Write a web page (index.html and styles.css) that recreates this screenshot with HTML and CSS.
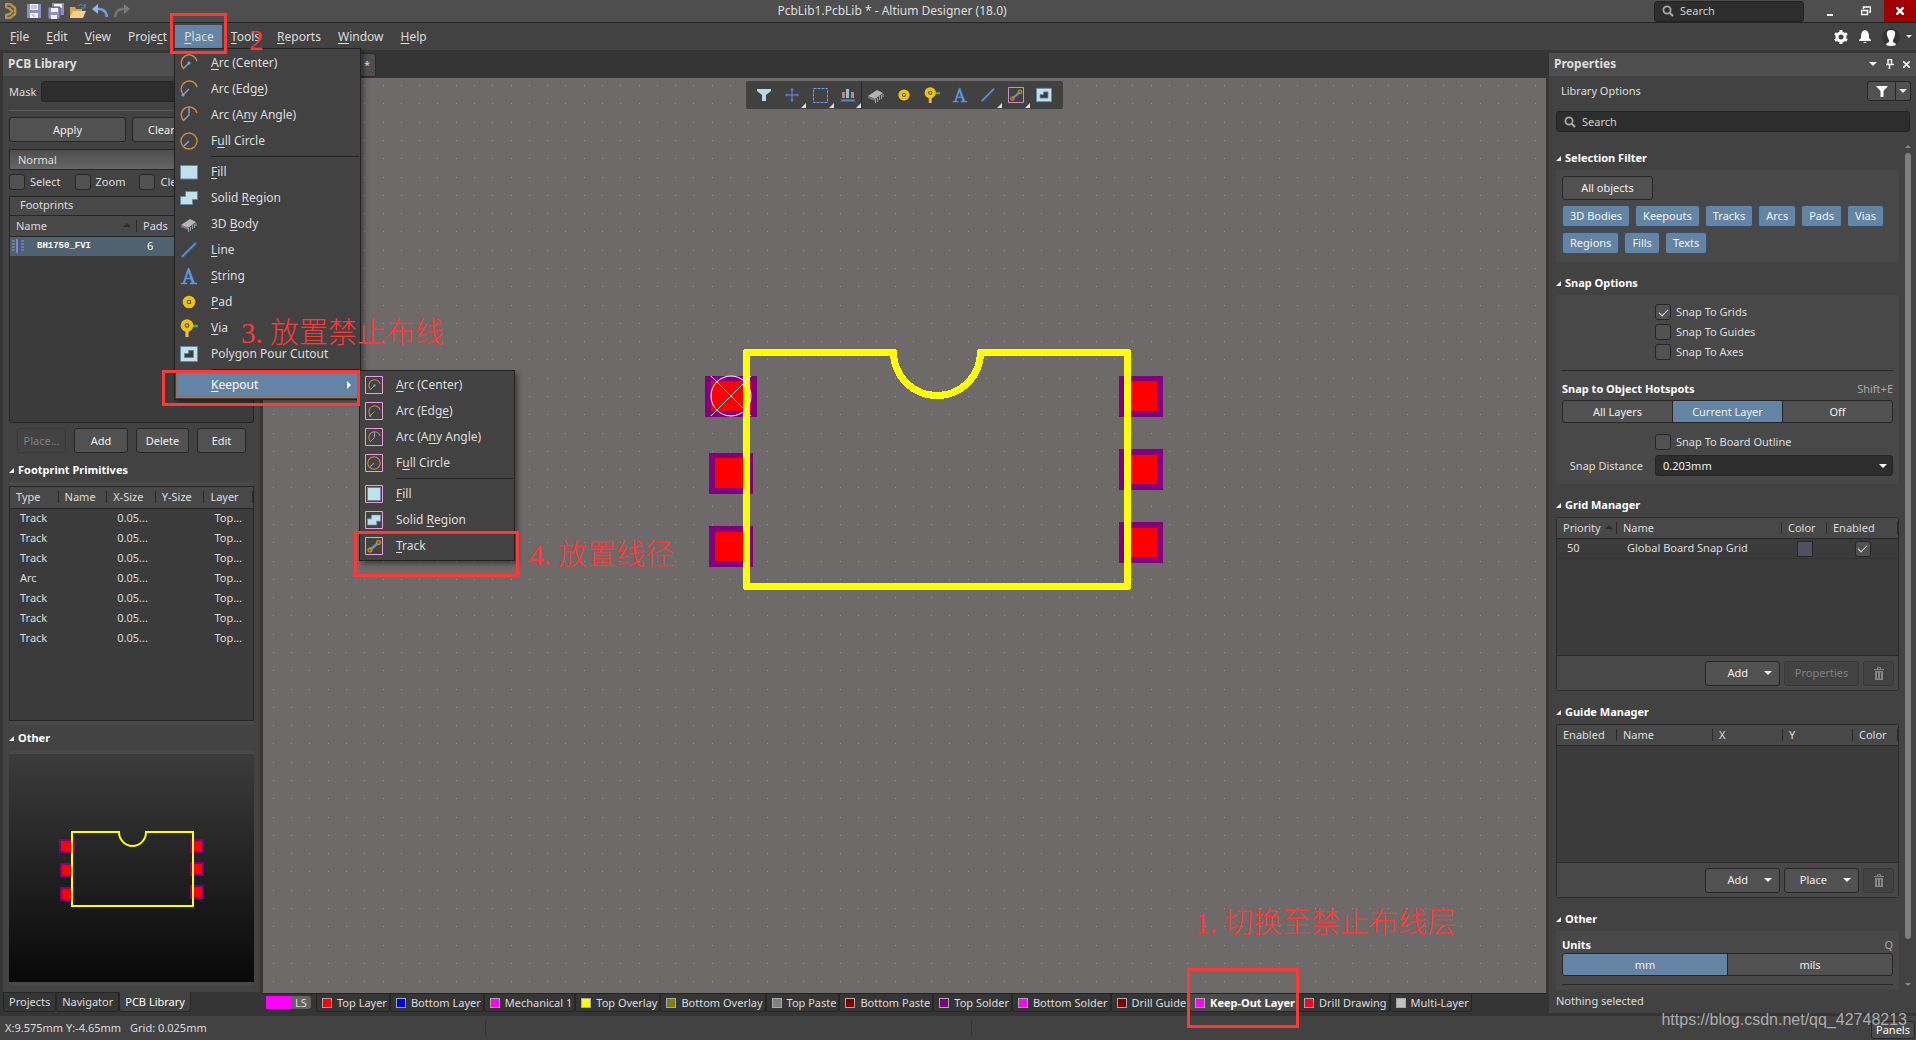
FILE: index.html
```html
<!DOCTYPE html>
<html lang="en">
<head>
<meta charset="utf-8">
<title>PcbLib1.PcbLib * - Altium Designer (18.0)</title>
<link rel="stylesheet" href="styles.css">
</head>
<body>
<svg class="defs" aria-hidden="true">
  <symbol id="arc-center" viewBox="0 0 18 18"><path d="M4 15A8 8 0 1 1 17 7" fill="none" stroke="#d08a3c" stroke-width="1.4"/><path d="M4 14L9 9" stroke="#86a8e6" stroke-width="1.2"/><circle cx="9" cy="9" r="1.6" fill="#7aa2ee"/></symbol>
  <symbol id="arc-edge" viewBox="0 0 18 18"><path d="M3 14A8 8 0 1 1 17 7" fill="none" stroke="#d08a3c" stroke-width="1.4"/><path d="M4 14L9 9" stroke="#86a8e6" stroke-width="1.2"/><circle cx="3" cy="15" r="1.6" fill="#7aa2ee"/></symbol>
  <symbol id="arc-any" viewBox="0 0 18 18"><path d="M4 15A8 8 0 1 1 17 7" fill="none" stroke="#d08a3c" stroke-width="1.4"/><path d="M4 14L9 9V1" fill="none" stroke="#86a8e6" stroke-width="1.3"/></symbol>
  <symbol id="circle" viewBox="0 0 18 18"><circle cx="9" cy="9" r="8" fill="none" stroke="#d08a3c" stroke-width="1.4"/><path d="M4 14L9 9" stroke="#86a8e6" stroke-width="1.3"/></symbol>
  <symbol id="fill" viewBox="0 0 18 18"><path d="M.5 2.500h17v13.500h-17z" fill="#c0e0ea" stroke="#64899f"/></symbol>
  <symbol id="region" viewBox="0 0 18 18"><path d="M5.500 2.500h12v8h-5v5h-12v-8h5z" fill="#c0e0ea" stroke="#64899f"/></symbol>
  <symbol id="body3d" viewBox="0 0 18 18"><path d="M1 10L10 4L16 7L8 13z" fill="#b4b4b4"/><path d="M1 10l7 3v2l-7-3z" fill="#777"/><path d="M8.500 13v4M10.500 12v4M12.500 10v4M14.500 9v4M16 8v3" stroke="#8ba8b0"/></symbol>
  <symbol id="line" viewBox="0 0 18 18"><path d="M2 16L16 2" stroke="#3f74bd" stroke-width="2.600"/><path d="M2 15.500L15.500 2" stroke="#6ba2e8"/></symbol>
  <symbol id="string" viewBox="0 0 18 18"><path d="M9 1l5.500 15H17v1h-7v-1h2l-1.200-4H6L4.500 16H7v1H1v-1h2L8 1.500zM8.300 5L6.400 11h4z" fill="#5b98e4" stroke="#5b98e4" stroke-width=".5"/></symbol>
  <symbol id="pad" viewBox="0 0 18 18"><circle cx="9" cy="9" r="4.300" fill="#4d4430" stroke="#edc40c" stroke-width="4"/><circle cx="9" cy="9" r="1.300" fill="#d8bc60"/></symbol>
  <symbol id="via" viewBox="0 0 18 18"><path d="M12 7h6" stroke="#5fa83c" stroke-width="2.500"/><path d="M7 12v6" stroke="#d99a4a" stroke-width="3.500"/><path d="M7 12v6" stroke="#f6d5a0"/><circle cx="7" cy="6.500" r="4.300" fill="#4d4430" stroke="#edc40c" stroke-width="4"/><circle cx="7" cy="6.500" r="1.300" fill="#d8bc60"/></symbol>
  <symbol id="cutout" viewBox="0 0 18 18"><path d="M.5 1.500h17v15h-17z" fill="#c0e0ea" stroke="#64899f"/><path d="M8.500 5.500h5v7h-9v-4h4z" fill="#3d3d3d" stroke="#64899f"/></symbol>
  <symbol id="track" viewBox="0 0 18 18"><path d="M5 13L13 6" stroke="#6d8fc4" stroke-width="2.400"/><circle cx="5" cy="13" r="1.900" fill="none" stroke="#b98a1c" stroke-width="1.500"/><circle cx="13.500" cy="5.500" r="1.900" fill="none" stroke="#b98a1c" stroke-width="1.500"/></symbol>
  <symbol id="frame" viewBox="0 0 18 18"><path d="M.5 .5h17v17H.5z" fill="none" stroke="#ee9cdc"/></symbol>
  <symbol id="down" viewBox="0 0 8 4"><path d="M0 0h8L4 4z" fill="#f0f0f0"/></symbol>
  <symbol id="lens" viewBox="0 0 12 12"><circle cx="5" cy="5" r="3.600" fill="none" stroke="#a8a8a8" stroke-width="1.800"/><path d="M8 8l3 3" stroke="#a8a8a8" stroke-width="2.200"/></symbol>
  <symbol id="trash" viewBox="0 0 10 13"><path d="M3.500 2V.5h3V2M0 2.500h10" fill="none" stroke="#858585"/><path d="M1 4h8v9H1z" fill="#858585"/><path d="M3.500 5.500v6M6.500 5.500v6" stroke="#444"/></symbol>
  <symbol id="chip" viewBox="0 0 12 14"><path d="M0 2h12M0 5h12M0 8h12M0 11h12" stroke="#8b97a5"/><path d="M3 0h6v14H3z" fill="#4b5688"/><path d="M4 0h2v14H4z" fill="#8088b4"/></symbol>
</svg>

<header class="titlebar">
  <div class="quick">
    <svg width="12" height="16" viewBox="0 0 12 16"><path d="M1 4V1h4l5 4v6l-5 4H1v-3l4-1 2-3-3-3z" fill="none" stroke="#b39250" stroke-width="2.500"/></svg>
    <svg width="16" height="16" viewBox="0 0 16 16"><path d="M1 1h14v14H1z" fill="#8d8dc4"/><path d="M4 1h8v6H4zM4 10h8v5H4z" fill="#f2f2fa"/><path d="M5 3h6M5 5h6M6 12h2v2" stroke="#9a9ab8" fill="none"/></svg>
    <svg width="16" height="16" viewBox="0 0 16 16"><path d="M4 0h12v12H4z" fill="#8d8dc4"/><path d="M6 1h8v4H6z" fill="#f2f2fa"/><path d="M0 4h12v12H0z" fill="#8d8dc4" stroke="#555"/><path d="M3 5h7v4H3zM3 12h6v4H3z" fill="#f2f2fa"/></svg>
    <svg width="16" height="16" viewBox="0 0 16 16"><path d="M0 15V4h5l1 2h6v9z" fill="#d6a752"/><path d="M3 8h13l-3 7H0z" fill="#f3d08c"/><path d="M8 3q3-3 6 0l1-2v4h-4" fill="none" stroke="#5d87b0"/></svg>
    <svg width="16" height="14" viewBox="0 0 16 14"><path d="M15 13q-1-8-8-8H4" fill="none" stroke="#6d9fe6" stroke-width="2.500"/><path d="M6 0v10L0 5z" fill="#8bb8f5"/></svg>
    <svg width="16" height="14" viewBox="0 0 16 14"><path d="M1 13q1-8 8-8h3" fill="none" stroke="#757575" stroke-width="2.500"/><path d="M10 0v10l6-5z" fill="#7c7c7c"/></svg>
  </div>
  <h1 class="apptitle">PcbLib1.PcbLib * - Altium Designer (18.0)</h1>
  <label class="search titlesearch"><svg width="12" height="12"><use href="#lens"/></svg><input type="text" aria-label="Search application" placeholder="Search"></label>
  <button class="winbtn" aria-label="Minimize"><svg width="10" height="10" viewBox="0 0 10 10"><path d="M2 9h6" stroke="#fff" stroke-width="2"/></svg></button>
  <button class="winbtn" aria-label="Restore"><svg width="10" height="10" viewBox="0 0 10 10"><path d="M.5 4.500h6v4h-6zM2.500 3V1h7v5H8" fill="none" stroke="#fff" stroke-width="1.500"/></svg></button>
  <button class="winbtn close" aria-label="Close"><svg width="8" height="8" viewBox="0 0 8 8"><path d="M0 0l8 8M8 0L0 8" stroke="#fff" stroke-width="2.500"/></svg></button>
</header>

<nav class="menubar">
  <button><u>F</u>ile</button><button><u>E</u>dit</button><button><u>V</u>iew</button><button>Proje<u>c</u>t</button><button class="open"><u>P</u>lace</button><button><u>T</u>ools</button><button><u>R</u>eports</button><button><u>W</u>indow</button><button><u>H</u>elp</button>
  <div class="account">
    <svg width="14" height="14" viewBox="0 0 14 14"><circle cx="7" cy="7" r="4" fill="none" stroke="#fff" stroke-width="3"/><path d="M7 0v3M7 11v3M1 3.500l2.500 1.500M10.500 9l2.500 1.500M1 10.500L3.500 9M10.500 5L13 3.500" stroke="#fff" stroke-width="3"/></svg>
    <svg width="12" height="14" viewBox="0 0 12 14"><path d="M6 0q4 1 4 6v2l2 2v1H0v-1l2-2V6q0-5 4-6zM4 12h4q-2 2-4 0z" fill="#fff"/></svg>
    <svg width="18" height="18" viewBox="0 0 18 18"><circle cx="9" cy="9" r="9" fill="#333"/><path d="M9 2q5 0 4 5-1 4-2 5v2q3 1 3 3-5 2-10 0 0-2 3-3v-2q-1-1-2-5-1-5 4-5z" fill="#fff"/></svg>
    <svg width="6" height="3"><use href="#down"/></svg>
  </div>
</nav>

<main class="workspace">
  <section class="left">
    <div class="panel">
      <h2 class="panelhead">PCB Library</h2>
      <div class="leftbody">
        <div class="maskrow"><label for="mask">Mask</label><input id="mask" class="field" type="text"></div>
        <hr>
        <div class="twobtn"><button class="btn">Apply</button><button class="btn">Clear</button></div>
        <select class="mode" aria-label="Highlight mode"><option>Normal</option></select>
        <div class="checks"><label><input type="checkbox">Select</label><label><input type="checkbox">Zoom</label><label><input type="checkbox">Clear Existing</label></div>
        <div class="footprints">
          <h3>Footprints</h3>
          <table>
            <colgroup><col class="c128"><col></colgroup>
            <thead><tr><th>Name<i class="sort"></i></th><th>Pads</th></tr></thead>
            <tbody><tr class="sel"><td><span class="fpname"><svg width="12" height="14"><use href="#chip"/></svg>BH1750_FVI</span></td><td class="center6">6</td></tr></tbody>
          </table>
        </div>
        <div class="fourbtn"><button class="btn" disabled>Place...</button><button class="btn">Add</button><button class="btn">Delete</button><button class="btn">Edit</button></div>
        <h3 class="section">Footprint Primitives</h3>
        <div class="tray">
          <div class="prims">
            <table>
              <thead><tr><th>Type</th><th>Name</th><th>X-Size</th><th>Y-Size</th><th>Layer</th></tr></thead>
              <tbody>
                <tr><td>Track</td><td></td><td>0.05...</td><td></td><td>Top...</td></tr>
                <tr><td>Track</td><td></td><td>0.05...</td><td></td><td>Top...</td></tr>
                <tr><td>Track</td><td></td><td>0.05...</td><td></td><td>Top...</td></tr>
                <tr><td>Arc</td><td></td><td>0.05...</td><td></td><td>Top...</td></tr>
                <tr><td>Track</td><td></td><td>0.05...</td><td></td><td>Top...</td></tr>
                <tr><td>Track</td><td></td><td>0.05...</td><td></td><td>Top...</td></tr>
                <tr><td>Track</td><td></td><td>0.05...</td><td></td><td>Top...</td></tr>
              </tbody>
            </table>
          </div>
        </div>
        <h3 class="section">Other</h3>
        <div class="tray grow">
          <div class="preview">
            <svg width="245" height="229" viewBox="0 0 245 229">
              <g fill="#f00" stroke="#800080" stroke-width="2"><path d="M51 86h14v12H51zM52 110h12v12H52zM52 134h12v12H52zM182 86h12v12h-12zM182 109h12v12h-12zM182 132h12v12h-12z"/></g>
              <path d="M110 78H63v74h121V78h-47a13.500 14 0 0 1-27 0z" fill="none" stroke="#ff0" stroke-width="2"/>
            </svg>
          </div>
        </div>
      </div>
    </div>
    <div class="paneltabs"><button>Projects</button><button>Navigator</button><button class="on">PCB Library</button></div>
  </section>

  <section class="center">
    <div class="doctabs"><button>PcbLib1.PcbLib *</button></div>
    <div class="canvas">
      <svg class="board" width="100%" height="100%">
        <defs>
          <pattern id="dots" x="10" y="117" width="128" height="128" patternUnits="userSpaceOnUse"><path d="M0 .5h128M0 18.500h128M0 36.500h128M0 55.500h128M0 73.500h128M0 91.500h128M0 110.500h128" stroke="#97938f" stroke-dasharray="1 17 1 17 1 18 1 17 1 17 1 18 1 17"/></pattern>
        </defs>
        <rect width="100%" height="100%" fill="url(#dots)"/>
        <g transform="translate(427 252)">
          <path d="M15 46h52v41H15zM19 123h44v41H19zM19 196h44v41H19zM429 46h44v41h-44zM429 119h44v41h-44zM429 192h44v41h-44z" fill="#800080"/>
          <path d="M21 51h40v30H21zM25 128h32v30H25zM25 202h32v29H25zM435 51h32v30h-32zM435 125h32v29h-32zM435 198h32v29h-32z" fill="#f00"/>
          <path d="M203.500 22H56.500v234.500h381V22h-147a43.500 43.500 0 0 1-87 0z" fill="none" stroke="#ff0" stroke-width="7" stroke-linejoin="round"/>
          <g fill="none" stroke="#fff"><circle cx="41" cy="66" r="20"/><path d="M21 46l40 40M61 46L21 86"/></g>
        </g>
      </svg>
      <div class="floatbar">
        <button aria-label="Filter"><svg width="14" height="12" viewBox="0 0 14 12"><path d="M0 0h14v2L9 6v6H5V6L0 2z" fill="#b9dbe6"/></svg></button>
        <button class="more" aria-label="Snap"><svg width="14" height="14" viewBox="0 0 14 14"><path d="M7 0v14M0 7h14M5.500 2h3M5.500 12h3M2 5.500v3M12 5.500v3" stroke="#6f8be0"/></svg></button>
        <button class="more" aria-label="Selection"><svg width="15" height="15" viewBox="0 0 15 15"><path d="M.5 .5h14v14H.5z" fill="none" stroke="#6f9df0" stroke-dasharray="3 1"/></svg></button>
        <button class="more wide" aria-label="Align"><svg width="14" height="14" viewBox="0 0 14 14"><path d="M1 4h3v6H1zM10 4h3v6h-3z" fill="#c98282"/><path d="M5 1h3v9H5z" fill="#8ec1e0"/><path d="M0 12.500h14" stroke="#5a87c0" stroke-width="2"/></svg></button>
        <button aria-label="3D body"><svg width="18" height="18"><use href="#body3d"/></svg></button>
        <button aria-label="Pad"><svg width="16" height="16"><use href="#pad"/></svg></button>
        <button aria-label="Via"><svg width="16" height="16"><use href="#via"/></svg></button>
        <button aria-label="String"><svg width="16" height="16"><use href="#string"/></svg></button>
        <button class="more" aria-label="Line"><svg width="16" height="16"><use href="#line"/></svg></button>
        <button class="more" aria-label="Keepout track"><svg width="16" height="16"><use href="#track"/><use href="#frame"/></svg></button>
        <button aria-label="Polygon cutout"><svg width="16" height="16"><use href="#cutout"/></svg></button>
      </div>
    </div>
    <div class="layers">
      <div class="ls"><span class="lscolor"></span><button>LS</button></div>
      <button><i class="red"></i>Top Layer</button><button><i class="blue"></i>Bottom Layer</button><button><i class="magenta"></i>Mechanical 1</button><button><i class="yellow"></i>Top Overlay</button><button><i class="olive"></i>Bottom Overlay</button><button><i class="gray"></i>Top Paste</button><button><i class="maroon"></i>Bottom Paste</button><button><i class="purple"></i>Top Solder</button><button><i class="magenta"></i>Bottom Solder</button><button><i class="maroon"></i>Drill Guide</button><button class="on"><i class="magenta"></i>Keep-Out Layer</button><button><i class="crimson"></i>Drill Drawing</button><button><i class="silver"></i>Multi-Layer</button>
    </div>
  </section>

  <section class="right">
    <div class="panelhead"><h2>Properties</h2>
      <svg width="8" height="4"><use href="#down"/></svg>
      <svg width="8" height="10" viewBox="0 0 8 10"><path d="M2 0v5M5.500 0v5M2 .5h4M0 5.500h8M3.500 6v4" fill="none" stroke="#f0f0f0" stroke-width="1.500"/></svg>
      <svg width="7" height="7" viewBox="0 0 8 8"><path d="M0 0l8 8M8 0L0 8" stroke="#f0f0f0" stroke-width="2"/></svg>
    </div>
    <div class="optrow"><span>Library Options</span>
      <div class="split"><button aria-label="Filter"><svg width="12" height="11" viewBox="0 0 12 11"><path d="M0 0h12L7.500 5v6h-3V5z" fill="#fff"/></svg></button><button aria-label="Filter options"><svg width="8" height="4"><use href="#down"/></svg></button></div>
    </div>
    <label class="search propsearch"><svg width="12" height="12"><use href="#lens"/></svg><input type="text" aria-label="Search properties" placeholder="Search"></label>
    <div class="scroller">
      <div class="props">
        <h3 class="section">Selection Filter</h3>
        <div class="card filter">
          <button class="btn all">All objects</button>
          <div class="chips"><button>3D Bodies</button><button>Keepouts</button><button>Tracks</button><button>Arcs</button><button>Pads</button><button>Vias</button><button>Regions</button><button>Fills</button><button>Texts</button></div>
        </div>
        <h3 class="section">Snap Options</h3>
        <div class="card snap">
          <label class="snapcheck"><input type="checkbox" checked>Snap To Grids</label>
          <label class="snapcheck"><input type="checkbox">Snap To Guides</label>
          <label class="snapcheck"><input type="checkbox">Snap To Axes</label>
          <hr>
          <div class="labelrow"><b>Snap to Object Hotspots</b><span>Shift+E</span></div>
          <div class="seg"><button>All Layers</button><button class="on">Current Layer</button><button>Off</button></div>
          <label class="snapcheck board-outline"><input type="checkbox">Snap To Board Outline</label>
          <div class="distance"><label for="dist">Snap Distance</label><select id="dist"><option>0.203mm</option></select></div>
        </div>
        <h3 class="section">Grid Manager</h3>
        <div class="manager">
          <table>
            <colgroup><col class="c60"><col><col class="c45"><col class="c71"></colgroup>
            <thead><tr><th>Priority<i class="sort"></i></th><th>Name</th><th>Color</th><th>Enabled</th></tr></thead>
            <tbody><tr><td>50</td><td>Global Board Snap Grid</td><td class="mid"><i class="swatch"></i></td><td class="mid"><input type="checkbox" checked aria-label="Enabled"></td></tr></tbody>
          </table>
          <div class="foot"><button class="btn dd">Add<svg width="8" height="4"><use href="#down"/></svg></button><button class="btn" disabled>Properties</button><button class="btn del" disabled aria-label="Delete grid"><svg width="10" height="13"><use href="#trash"/></svg></button></div>
        </div>
        <h3 class="section">Guide Manager</h3>
        <div class="manager">
          <table>
            <colgroup><col class="c60"><col><col class="c70"><col class="c70"><col class="c45"></colgroup>
            <thead><tr><th>Enabled</th><th>Name</th><th>X</th><th>Y</th><th>Color</th></tr></thead>
          </table>
          <div class="foot"><button class="btn dd">Add<svg width="8" height="4"><use href="#down"/></svg></button><button class="btn dd">Place<svg width="8" height="4"><use href="#down"/></svg></button><button class="btn del" disabled aria-label="Delete guide"><svg width="10" height="13"><use href="#trash"/></svg></button></div>
        </div>
        <h3 class="section">Other</h3>
        <div class="card units">
          <div class="labelrow"><b>Units</b><span>Q</span></div>
          <div class="seg"><button class="on">mm</button><button>mils</button></div>
          <hr>
        </div>
      </div>
      <div class="scrollbar"><i class="up"></i><i class="thumb"></i><i class="dn"></i></div>
    </div>
    <div class="selstatus">Nothing selected</div>
  </section>
</main>

<footer class="status"><div class="cell"><span>X:9.575mm Y:-4.65mm</span><span>Grid: 0.025mm</span></div><div class="cell"></div><button class="panels">Panels</button></footer>

<div class="menu place">
  <button><svg width="18" height="18"><use href="#arc-center"/></svg><span><u>A</u>rc (Center)</span></button>
  <button><svg width="18" height="18"><use href="#arc-edge"/></svg><span>Arc (Edg<u>e</u>)</span></button>
  <button><svg width="18" height="18"><use href="#arc-any"/></svg><span>Arc (A<u>n</u>y Angle)</span></button>
  <button><svg width="18" height="18"><use href="#circle"/></svg><span>F<u>u</u>ll Circle</span></button>
  <hr>
  <button><svg width="18" height="18"><use href="#fill"/></svg><span><u>F</u>ill</span></button>
  <button><svg width="18" height="18"><use href="#region"/></svg><span>Solid <u>R</u>egion</span></button>
  <button><svg width="18" height="18"><use href="#body3d"/></svg><span>3D <u>B</u>ody</span></button>
  <button><svg width="18" height="18"><use href="#line"/></svg><span><u>L</u>ine</span></button>
  <button><svg width="18" height="18"><use href="#string"/></svg><span><u>S</u>tring</span></button>
  <button><svg width="18" height="18"><use href="#pad"/></svg><span><u>P</u>ad</span></button>
  <button><svg width="18" height="18"><use href="#via"/></svg><span><u>V</u>ia</span></button>
  <button><svg width="18" height="18"><use href="#cutout"/></svg><span>Polygon Pour Cutout</span></button>
  <hr>
  <button class="on"><svg width="18" height="18"></svg><span><u>K</u>eepout</span><svg class="caret" width="4" height="8" viewBox="0 0 4 8"><path d="M0 0l4 4-4 4z" fill="#fff"/></svg></button>
</div>
<div class="menu keepout">
  <button><svg width="18" height="18"><use href="#arc-center" x="3" y="3" width="13" height="13"/><use href="#frame"/></svg><span><u>A</u>rc (Center)</span></button>
  <button><svg width="18" height="18"><use href="#arc-edge" x="3" y="3" width="13" height="13"/><use href="#frame"/></svg><span>Arc (Edg<u>e</u>)</span></button>
  <button><svg width="18" height="18"><use href="#arc-any" x="3" y="3" width="13" height="13"/><use href="#frame"/></svg><span>Arc (A<u>n</u>y Angle)</span></button>
  <button><svg width="18" height="18"><use href="#circle" x="2" y="2" width="14" height="14"/><use href="#frame"/></svg><span>F<u>u</u>ll Circle</span></button>
  <hr>
  <button><svg width="18" height="18"><path d="M2.500 2.500h13v13h-13z" fill="#c0e0ea" stroke="#64899f"/><use href="#frame"/></svg><span><u>F</u>ill</span></button>
  <button><svg width="18" height="18"><use href="#region" x="2" y="2" width="14" height="14"/><use href="#frame"/></svg><span>Solid <u>R</u>egion</span></button>
  <button><svg width="18" height="18"><use href="#track"/><use href="#frame"/></svg><span><u>T</u>rack</span></button>
</div>

<div class="mark m-place"></div>
<div class="mark m-keepout"></div>
<div class="mark m-track"></div>
<div class="mark m-layer"></div>
<div class="note n2">2</div>
<div class="note n3">3. 放置禁止布线</div>
<div class="note n4">4. 放置线径</div>
<div class="note n1">1. 切换至禁止布线层</div>
<div class="watermark">https://blog.csdn.net/qq_42748213</div>
</body>
</html>
```
FILE: styles.css
```css
* { box-sizing: border-box; }
body {
  margin: 0;
  height: 100vh;
  display: flex;
  flex-direction: column;
  overflow: hidden;
  position: relative;
  background: #353535;
  color: #dedede;
  font: 11px/16px "Noto Sans", "Noto Sans CJK SC", sans-serif;
}
button, input, select { font: inherit; color: inherit; margin: 0; padding: 0; border: 0; background: none; }
h1, h2, h3 { margin: 0; font-size: inherit; }
svg { display: block; flex: none; }
hr { border: 0; border-top: 1px solid #2b2b2b; margin: 0; width: 100%; }
u { text-underline-offset: 2px; }
.defs { position: absolute; width: 0; height: 0; }

/* title bar */
.titlebar { display: flex; align-items: center; height: 23px; flex: none; background: #4e4e4e; border-bottom: 1px solid #242424; }
.quick { display: flex; align-items: center; gap: 6px; padding-left: 5px; }
.quick svg:first-child { margin-right: 3px; }
.apptitle { flex: 1; text-align: center; font-weight: 400; font-size: 12px; }
.search { display: flex; align-items: center; gap: 6px; background: #2d2d2d; border: 1px solid #222; border-radius: 3px; padding-left: 7px; height: 21px; }
.search input { flex: 1; min-width: 0; outline: 0; }
.search input::placeholder { color: #d0d0d0; opacity: 1; }
.titlesearch { width: 150px; margin-right: 8px; }
.winbtn { width: 36px; height: 22px; display: grid; place-items: center; }
.winbtn.close { width: 32px; background: #a00000; }

/* menu bar */
.menubar { display: flex; align-items: center; height: 27px; flex: none; padding: 0 4px 0 1px; background: #424242; font-size: 12px; }
.menubar > button { height: 23px; padding: 0 8px 0 9px; }
.menubar .open { background: #6384a4; }
.account { margin-left: auto; display: flex; align-items: center; gap: 11px; }
.account svg:last-child { margin-left: -5px; }

.workspace { flex: 1; min-height: 0; display: flex; }

/* shared controls */
.panelhead { height: 23px; flex: none; display: flex; align-items: center; gap: 9px; padding: 0 6px 1px 5px; background: #4e4e4e; font-size: 12px; font-weight: 700; }
.panelhead h2 { flex: 1; }
.btn { height: 25px; background: #515151; border: 1px solid #262626; border-radius: 3px; color: #f0f0f0; }
.btn:disabled { background: #424242; border-color: #383838; color: #808080; }
.field { background: #2d2d2d; border: 1px solid #242424; border-radius: 3px; height: 21px; }
input[type="checkbox"] { appearance: none; flex: none; width: 16px; height: 16px; background: #515151; border: 1px solid #262626; border-radius: 3px; display: grid; place-items: center; }
input[type="checkbox"]:checked::before { content: ""; width: 8px; height: 4px; margin-top: -2px; border: solid #e0e0e0; border-width: 0 0 1px 1px; transform: rotate(-45deg); }
.section { display: flex; align-items: center; gap: 4px; font-weight: 700; color: #fff; line-height: 16px; }
.section::before { content: ""; border: solid transparent; border-width: 0 0 5px 5px; border-bottom-color: #eee; }
table { width: 100%; border-collapse: collapse; table-layout: fixed; }
th { height: 20px; padding: 0 0 0 6px; text-align: left; font-weight: 400; position: relative; background: #484848; border-bottom: 1px solid #262626; white-space: nowrap; }
th::after { content: ""; position: absolute; right: 0; top: 4px; height: 12px; border-right: 1px solid #2a2a2a; }
td { height: 20px; padding: 0 0 0 10px; white-space: nowrap; }
.sort { display: inline-block; border: 4px solid transparent; border-top: 0; border-bottom-color: #2a2a2a; margin: 0 0 3px 4px; }
.mid { text-align: center; padding: 0; }
.mid input, .swatch { display: inline-grid; vertical-align: middle; }
.swatch { width: 16px; height: 16px; background: #51505f; border: 1px solid #262626; }

/* left panel */
.left { width: 260px; flex: none; display: flex; flex-direction: column; padding: 3px 0 4px 3px; }
.panel { flex: 1; min-height: 0; display: flex; flex-direction: column; background: #424242; }
.leftbody { flex: 1; min-height: 0; display: flex; flex-direction: column; padding: 5px 6px 6px; }
.maskrow { display: flex; align-items: center; gap: 5px; }
.maskrow input { flex: 1; min-width: 0; }
.leftbody > hr { margin: 8px 0 6px; border-color: #585858; }
.twobtn { display: grid; grid-template-columns: 117px 1fr; gap: 6px; }
.twobtn .btn:nth-child(2) { text-align: left; padding-left: 15px; }
.mode { height: 21px; margin: 7px 0 4px; padding-left: 8px; appearance: none; background: linear-gradient(#4d4d4d, #666); border: 1px solid #262626; border-radius: 2px; }
.checks { display: flex; gap: 14px; white-space: nowrap; overflow: hidden; flex: none; }
.checks label, .snapcheck { display: flex; align-items: center; gap: 5px; }
.footprints { height: 227px; margin: 6px 0 5px; flex: none; border: 1px solid #262626; border-radius: 2px; background: #3b3b3b; }
.footprints h3 { height: 19px; padding-left: 10px; font-weight: 400; background: #484848; border-bottom: 1px solid #262626; }
.c128 { width: 127px; }
.footprints .sort { margin-left: 76px; }
.footprints .sel { background: #4f6272; color: #fff; }
.footprints td { padding-left: 2px; }
.footprints .center6 { padding-left: 10px; }
.fpname { display: flex; align-items: center; gap: 13px; font: 700 9px/14px "Liberation Mono", monospace; }
.fourbtn { display: grid; grid-template-columns: 49px 54px 53px 49px; gap: 8px; padding-left: 8px; }
.leftbody .section { margin: 9px 0 4px; }
.leftbody .tray + .section { margin-top: 5px; }
.tray { background: #484848; border-radius: 3px; padding: 4px 0; }
.tray.grow { flex: 1; min-height: 0; display: flex; }
.prims { height: 235px; border: 1px solid #262626; background: #3b3b3b; }
.prims th { height: 21px; }
.preview { flex: 1; display: grid; place-items: center; background: linear-gradient(#3b3b3b, #080808); }
.paneltabs { display: flex; height: 20px; flex: none; }
.paneltabs button { padding: 0 5px; border: 1px solid #262626; border-radius: 0 0 3px 3px; background: #353535; }
.paneltabs .on { background: #424242; border-top-color: #424242; color: #fff; }

/* editor */
.center { flex: 1; min-width: 0; display: flex; flex-direction: column; padding: 0 3px; }
.doctabs { height: 28px; flex: none; padding-top: 3px; }
.doctabs button { height: 24px; width: 113px; padding-right: 5px; text-align: right; background: #4e4e4e; border: 1px solid #2a2a2a; border-radius: 3px 3px 0 0; }
.canvas { flex: 1; min-height: 0; position: relative; background: #6e6a69; display: flex; justify-content: center; align-items: flex-start; }
.board { position: absolute; inset: 0; }
.board path, .board rect { shape-rendering: crispEdges; }
.floatbar { position: relative; display: flex; margin-top: 3px; padding: 0 5px 0 4px; height: 28px; background: #414141; border-radius: 2px; }
.floatbar button { width: 28px; display: grid; place-items: center; position: relative; }
.floatbar .wide { border-right: 1px solid #262626; background-clip: content-box; }
.floatbar .more::after { content: ""; position: absolute; right: 0; bottom: 1px; border: solid transparent; border-width: 0 0 5px 5px; border-bottom-color: #ddd; }
.layers { height: 23px; flex: none; display: flex; align-items: flex-start; padding: 0 0 0 3px; white-space: nowrap; border-top: 1px solid #222; }
.layers > button { height: 18px; display: flex; align-items: center; gap: 5px; padding: 0 2px 0 5px; background: #353535; border: 1px solid #262626; border-top: 0; border-radius: 0 0 3px 3px; }
.layers > .on { background: #4b4b4b; color: #fff; font-weight: 700; }
.layers i { width: 10px; height: 10px; border: 1px solid #a8a8a8; }
.ls { display: flex; height: 13px; margin: 2px 5px 0 0; line-height: 13px; }
.lscolor { width: 25px; background: #f0f; }
.ls button { width: 20px; background: #646464; border-radius: 0 3px 3px 0; }
.red { background: #f00; } .blue { background: #00f; } .magenta { background: #f0f; } .yellow { background: #ff0; }
.olive { background: #808000; } .gray { background: #808080; } .maroon { background: #800000; } .purple { background: #800080; }
.crimson { background: #ff0028; } .silver { background: #c0c0c0; }

/* properties panel */
.right { width: 367px; flex: none; display: flex; flex-direction: column; margin: 3px 0; background: #424242; }
.optrow { display: flex; justify-content: space-between; align-items: center; padding: 5px 5px 0 12px; }
.split { display: flex; height: 20px; }
.split button { width: 29px; display: grid; place-items: center; background: #515151; border: 1px solid #262626; border-radius: 3px 0 0 3px; }
.split button + button { width: 15px; border-left: 0; border-radius: 0 3px 3px 0; }
.propsearch { margin: 10px 6px 11px 7px; flex: none; }
.scroller { flex: 1; min-height: 0; display: flex; overflow: hidden; }
.props { flex: 1; min-width: 0; padding: 7px 0 0 7px; }
.props .section { margin-bottom: 4px; }
.card { background: #484848; border-radius: 3px; padding: 6px; margin-bottom: 13px; }
.filter { padding-bottom: 8px; }
.all { width: 91px; height: 24px; margin-bottom: 5px; display: block; }
.chips { display: flex; flex-wrap: wrap; gap: 5px; }
.chips button { height: 22px; padding: 0 7px; background: #6384a4; border: 1px solid #34506c; border-radius: 3px; color: #f4f4f4; }
.snap { padding: 9px 6px 8px; }
.snapcheck { margin: 0 0 4px 93px; }
.snap hr { margin: 10px 0; }
.labelrow { display: flex; justify-content: space-between; margin-bottom: 3px; }
.labelrow b { color: #fff; }
.labelrow span { color: #a8a8a8; }
.seg { display: flex; height: 23px; border: 1px solid #262626; border-radius: 3px; background: #515151; overflow: hidden; }
.seg button { flex: 1; color: #f0f0f0; }
.seg button + button { border-left: 1px solid #262626; }
.seg .on { background: #6384a4; }
.board-outline { margin: 11px 0 5px 93px; }
.distance { display: flex; align-items: center; position: relative; }
.distance label { width: 93px; padding-right: 12px; text-align: right; }
.distance select { flex: 1; height: 21px; padding-left: 7px; appearance: none; border: 1px solid #242424; border-radius: 3px; color: #f0f0f0; background: #2d2d2d; }
.distance::after { content: ""; position: absolute; right: 6px; border: 4px solid transparent; border-bottom: 0; border-top-color: #fff; }
.manager { height: 174px; margin-bottom: 13px; display: flex; flex-direction: column; border: 1px solid #2a2a2a; border-radius: 3px; background: #3b3b3b; }
.manager tbody tr { border-bottom: 1px solid #343434; }
.c60 { width: 60px; } .c45 { width: 45px; } .c71 { width: 71px; } .c70 { width: 70px; }
.foot { margin-top: auto; height: 35px; display: flex; justify-content: flex-end; align-items: center; gap: 4px; padding-right: 4px; background: #484848; border-top: 1px solid #2a2a2a; }
.foot .btn { width: 75px; display: flex; align-items: center; justify-content: center; }
.foot .dd { gap: 16px; justify-content: flex-end; padding-right: 7px; }
.foot .del { width: 31px; }
.units .labelrow { margin-bottom: 0; }
.units hr { margin: 8px 0 4px; }
.scrollbar { width: 17px; display: flex; flex-direction: column; align-items: center; gap: 5px; padding-top: 2px; }
.scrollbar i { border: 3px solid transparent; }
.scrollbar .up { border-top: 0; border-bottom-color: #888; }
.scrollbar .dn { border-bottom: 0; border-top-color: #888; margin: auto 0 4px; }
.scrollbar .thumb { border: 0; width: 6px; height: 93%; background: #7e7e7e; border-radius: 3px; }
.selstatus { padding: 3px 7px 4px; }

/* status bar */
.status { height: 24px; flex: none; display: flex; align-items: center; background: #424242; }
.cell { width: 486px; height: 16px; display: flex; gap: 9px; padding-left: 5px; border-right: 1px solid #353535; }
.panels { margin: 3px 1px 0 auto; width: 44px; height: 18px; background: #4a4a4a; border: 1px solid #262626; border-radius: 3px; color: #fff; }

/* drop-down menus */
.menu { position: absolute; display: flex; flex-direction: column; padding: 1px; background: #424242; border: 1px solid #222; box-shadow: 3px 3px 5px #0006; font-size: 12px; }
.menu button { height: 26px; display: flex; align-items: center; gap: 13px; padding: 0 8px 0 4px; text-align: left; }
.menu hr { width: auto; margin: 2px 0 2px 35px; border-color: #222; }
.menu .on { background: #6384a4; border: 2px solid #8c7565; border-right: 0; padding-left: 2px; color: #fff; }
.menu .caret { margin-left: auto; }
.place { left: 174px; top: 48px; width: 187px; }
.keepout { left: 359px; top: 370px; width: 156px; }

/* tutorial marks */
.mark { position: absolute; border: 3px solid #ff3838; }
.m-place { left: 170px; top: 13px; width: 57px; height: 41px; }
.m-keepout { left: 162px; top: 370px; width: 198px; height: 36px; }
.m-track { left: 354px; top: 531px; width: 165px; height: 46px; }
.m-layer { left: 1187px; top: 968px; width: 112px; height: 60px; }
.note { position: absolute; color: #ff3838; font: 300 29px/32px "Liberation Serif", "Noto Sans CJK SC", serif; white-space: nowrap; }
.n2 { left: 249px; top: 24px; }
.n3 { left: 241px; top: 317px; }
.n4 { left: 529px; top: 539px; }
.n1 { left: 1195px; top: 907px; }
.watermark { position: absolute; right: 9px; bottom: 10px; color: #bdbdbde0; font: 16px/20px "Liberation Sans", sans-serif; }
```
